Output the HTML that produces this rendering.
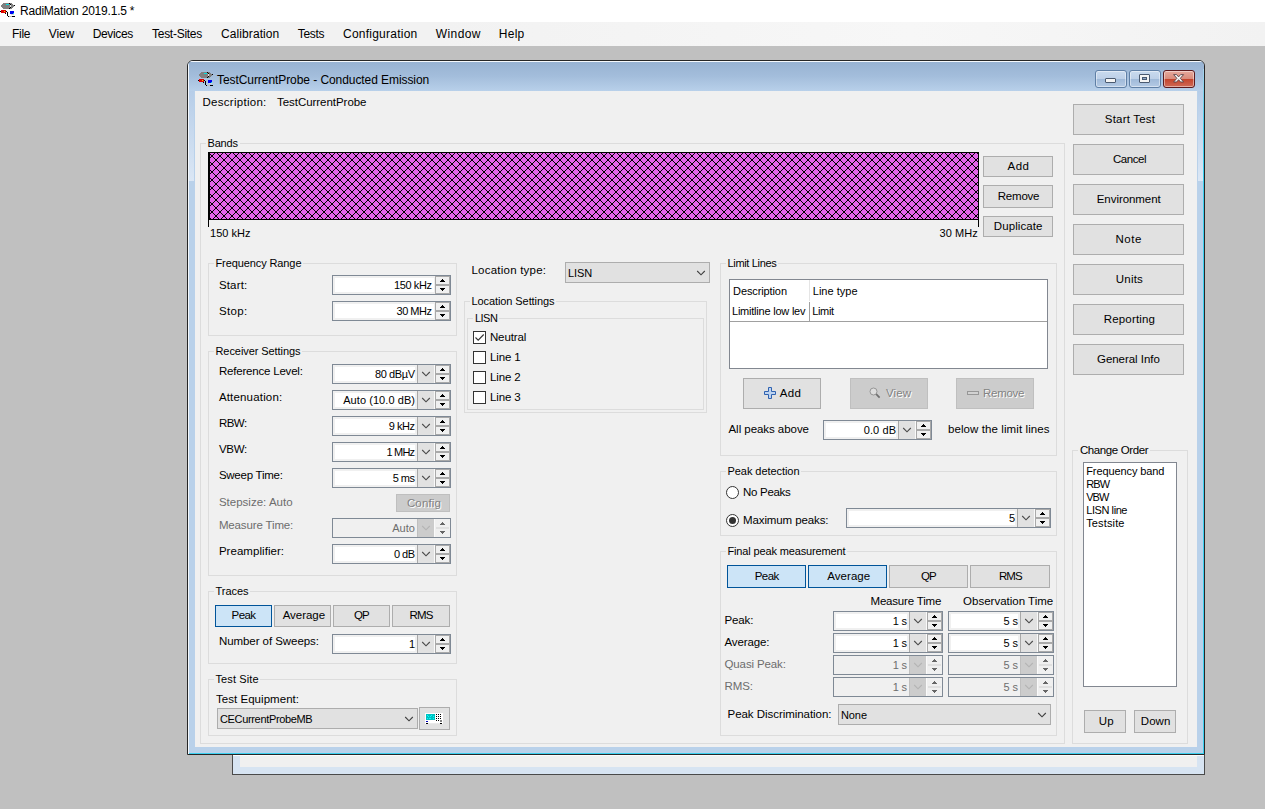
<!DOCTYPE html>
<html><head><meta charset="utf-8"><title>RadiMation 2019.1.5 *</title>
<style>
html,body{margin:0;padding:0;}
body{width:1265px;height:809px;overflow:hidden;position:relative;background:#c0c0c0;
font-family:"Liberation Sans",sans-serif;font-size:11.5px;color:#000;}
div,span,svg{position:absolute;box-sizing:border-box;}
.t{white-space:pre;line-height:16px;height:16px;}
.gb{border:1px solid #dcdcdc;}
.btn{background:#e1e1e1;border:1px solid #adadad;}
.btn.sel{background:#cce4f7;border-color:#005499;}
.btn.dis{background:#cccccc;border-color:#bfbfbf;}
</style></head><body>

<div class="" style="left:0px;top:0px;width:1265px;height:22px;background:#fff;"></div>
<div class="" style="left:0px;top:22px;width:1265px;height:24px;background:linear-gradient(to right,#f2f2f2 0%,#f2f2f2 35%,#f7f7f7 72%,#f2f2f2 100%);"></div>
<svg class="a" style="left:0px;top:2px" width="16" height="16" viewBox="0 0 16 16" shape-rendering="crispEdges"><polygon points="1,4 3,1 11,1 14,4 11,7 3,7" fill="#808080"/><rect x="6" y="2" width="3" height="1" fill="#00e0e0"/><rect x="10" y="3" width="1" height="2" fill="#e8e8e8"/><rect x="9" y="1" width="1" height="1" fill="#000"/><rect x="10" y="2" width="1" height="1" fill="#000"/><rect x="10" y="5" width="1" height="1" fill="#000"/><rect x="9" y="6" width="1" height="1" fill="#000"/><rect x="14" y="3" width="1" height="1" fill="#000"/><rect x="0" y="9" width="7" height="1" fill="#000"/><rect x="1" y="8" width="5" height="3" fill="#e00000"/><rect x="4" y="9" width="1" height="1" fill="#e0e000"/><rect x="5" y="11" width="1" height="1" fill="#000"/><rect x="7" y="10" width="1" height="4" fill="#000"/><rect x="8" y="14" width="1" height="1" fill="#000"/><rect x="9" y="14" width="3" height="1" fill="#c0c0c0"/><rect x="12" y="14" width="3" height="1" fill="#000"/><rect x="10" y="9" width="4" height="3" fill="#0000f0"/><rect x="13" y="11" width="1" height="1" fill="#00e0e0"/><rect x="11" y="12" width="3" height="1" fill="#d8d8d8"/></svg>
<span class="t " style="left:20.00px;top:3px;font-size:12px;letter-spacing:-0.212px;">RadiMation 2019.1.5 *</span>
<span class="t " style="left:12.00px;top:26px;font-size:12px;letter-spacing:-0.279px;">File</span>
<span class="t " style="left:48.75px;top:26px;font-size:12px;letter-spacing:-0.098px;">View</span>
<span class="t " style="left:92.75px;top:26px;font-size:12px;letter-spacing:-0.363px;">Devices</span>
<span class="t " style="left:152.00px;top:26px;font-size:12px;letter-spacing:-0.270px;">Test-Sites</span>
<span class="t " style="left:221.00px;top:26px;font-size:12px;letter-spacing:0.089px;">Calibration</span>
<span class="t " style="left:297.75px;top:26px;font-size:12px;letter-spacing:-0.314px;">Tests</span>
<span class="t " style="left:343.00px;top:26px;font-size:12px;letter-spacing:0.239px;">Configuration</span>
<span class="t " style="left:435.75px;top:26px;font-size:12px;letter-spacing:0.414px;">Window</span>
<span class="t " style="left:498.75px;top:26px;font-size:12px;letter-spacing:0.273px;">Help</span>
<div class="" style="left:232px;top:700px;width:973px;height:75px;background:#d7e4f2;border:1px solid #4a4a4a;"></div>
<div class="" style="left:240px;top:700px;width:957px;height:67px;background:#f0f0f0;"></div>
<div class="" style="left:233px;top:755px;width:971px;height:1px;background:#fafcfe;"></div>
<div style="left:187px;top:60px;width:1018px;height:695px;border:1px solid #262626;border-radius:6px 6px 0 0;background:#b9d1ea;overflow:hidden;"><div style="left:0;top:0;width:1016px;height:30px;background:linear-gradient(#97b2d2,#a3bddb 50%,#b8d0ea);"></div><div style="left:0;top:30px;width:7px;height:90px;background:linear-gradient(#b6cde8,#dbe7f5);"></div><div style="left:1009px;top:30px;width:7px;height:90px;background:linear-gradient(#b6cde8,#dbe7f5);"></div><div style="left:6px;top:30px;width:1px;height:90px;background:#b9d1ea;"></div><div style="left:1009px;top:30px;width:1px;height:90px;background:#b9d1ea;"></div><div style="left:0;top:0;width:1016px;height:1px;background:#f6f9fc;"></div><div style="left:0;top:1px;width:1px;height:692px;background:#f4f8fc;"></div><div style="left:1015px;top:8px;width:1px;height:685px;background:linear-gradient(#a8d4ec,#3ad0f0 60px);"></div><div style="left:1px;top:692px;width:1015px;height:1px;background:#3ad0f0;"></div></div>
<div class="" style="left:195px;top:91px;width:1002px;height:656px;background:#f0f0f0;"></div>
<svg class="a" style="left:198px;top:71px" width="16" height="16" viewBox="0 0 16 16" shape-rendering="crispEdges"><polygon points="1,4 3,1 11,1 14,4 11,7 3,7" fill="#808080"/><rect x="6" y="2" width="3" height="1" fill="#00e0e0"/><rect x="10" y="3" width="1" height="2" fill="#e8e8e8"/><rect x="9" y="1" width="1" height="1" fill="#000"/><rect x="10" y="2" width="1" height="1" fill="#000"/><rect x="10" y="5" width="1" height="1" fill="#000"/><rect x="9" y="6" width="1" height="1" fill="#000"/><rect x="14" y="3" width="1" height="1" fill="#000"/><rect x="0" y="9" width="7" height="1" fill="#000"/><rect x="1" y="8" width="5" height="3" fill="#e00000"/><rect x="4" y="9" width="1" height="1" fill="#e0e000"/><rect x="5" y="11" width="1" height="1" fill="#000"/><rect x="7" y="10" width="1" height="4" fill="#000"/><rect x="8" y="14" width="1" height="1" fill="#000"/><rect x="9" y="14" width="3" height="1" fill="#c0c0c0"/><rect x="12" y="14" width="3" height="1" fill="#000"/><rect x="10" y="9" width="4" height="3" fill="#0000f0"/><rect x="13" y="11" width="1" height="1" fill="#00e0e0"/><rect x="11" y="12" width="3" height="1" fill="#d8d8d8"/></svg>
<span class="t " style="left:217.00px;top:72px;font-size:12px;letter-spacing:-0.070px;">TestCurrentProbe - Conducted Emission</span>
<div class="" style="left:1095px;top:70px;width:32px;height:18px;background:linear-gradient(#c9daee 0%,#bdd0e8 48%,#9fb9d8 50%,#b4cae4 100%);border:1px solid #5f7fa5;border-radius:3px;box-shadow:inset 0 0 0 1px rgba(255,255,255,.45);"></div>
<div class="" style="left:1129px;top:70px;width:32px;height:18px;background:linear-gradient(#c9daee 0%,#bdd0e8 48%,#9fb9d8 50%,#b4cae4 100%);border:1px solid #5f7fa5;border-radius:3px;box-shadow:inset 0 0 0 1px rgba(255,255,255,.45);"></div>
<div class="" style="left:1163px;top:70px;width:32px;height:18px;background:linear-gradient(#e6a99d 0%,#d98c7c 48%,#c4432b 50%,#cf6a57 100%);border:1px solid #5c1a1e;border-radius:3px;box-shadow:inset 0 0 0 1px rgba(255,255,255,.45);"></div>
<div class="" style="left:1105px;top:78px;width:11px;height:5px;background:#f4f4f4;border:1px solid #4a5a70;border-radius:1px;"></div>
<div class="" style="left:1139px;top:74px;width:11px;height:9px;background:#f4f4f4;border:1px solid #4a5a70;border-radius:1px;"></div>
<div class="" style="left:1142px;top:77px;width:5px;height:3px;background:#8fa8c8;border:1px solid #4a5a70;"></div>
<svg class="a" style="left:1173px;top:74px" width="12" height="9" viewBox="0 0 12 9"><path d="M0.6 0.6 L3.6 0.6 L5.6 2.9 L7.6 0.6 L10.6 0.6 L7.3 4.3 L10.6 8 L7.6 8 L5.6 5.7 L3.6 8 L0.6 8 L3.9 4.3 Z" fill="#f6f6f6" stroke="#5a4348" stroke-width="0.9"/></svg>
<span class="t " style="left:202.50px;top:94px;font-size:11.5px;letter-spacing:0.276px;">Description:</span>
<span class="t " style="left:277.00px;top:94px;font-size:11.5px;letter-spacing:-0.042px;">TestCurrentProbe</span>
<div class="gb" style="left:200px;top:143px;width:865px;height:601px;"></div>
<div class="a" style="left:206px;top:141px;width:33.5px;height:5px;background:#f0f0f0;"></div>
<span class="t " style="left:207.50px;top:135px;font-size:11px;letter-spacing:-0.172px;">Bands</span>
<svg class="a" style="left:208px;top:152px" width="771" height="68" shape-rendering="crispEdges"><defs><pattern id="hx" width="8" height="8" patternUnits="userSpaceOnUse"><rect width="8" height="8" fill="#e264e8"/><g fill="#000"><rect x="0" y="0" width="1" height="1"/><rect x="0" y="7" width="1" height="1"/><rect x="1" y="1" width="1" height="1"/><rect x="1" y="6" width="1" height="1"/><rect x="2" y="2" width="1" height="1"/><rect x="2" y="5" width="1" height="1"/><rect x="3" y="3" width="1" height="1"/><rect x="3" y="4" width="1" height="1"/><rect x="4" y="4" width="1" height="1"/><rect x="4" y="3" width="1" height="1"/><rect x="5" y="5" width="1" height="1"/><rect x="5" y="2" width="1" height="1"/><rect x="6" y="6" width="1" height="1"/><rect x="6" y="1" width="1" height="1"/><rect x="7" y="7" width="1" height="1"/><rect x="7" y="0" width="1" height="1"/></g></pattern></defs><rect width="771" height="68" fill="url(#hx)"/><rect x="0" y="0" width="2" height="68" fill="#000"/><rect x="0" y="0" width="771" height="1" fill="#000"/><rect x="770" y="0" width="1" height="68" fill="#000"/><rect x="0" y="67" width="771" height="1" fill="#000"/></svg>
<div class="" style="left:208px;top:220px;width:1px;height:7px;background:#000;"></div>
<div class="" style="left:978px;top:220px;width:1px;height:7px;background:#000;"></div>
<span class="t " style="left:210.00px;top:225px;font-size:11px;letter-spacing:0.024px;">150 kHz</span>
<span class="t " style="left:939.50px;top:225px;font-size:11px;letter-spacing:0.060px;">30 MHz</span>
<div class="btn" style="left:983px;top:156px;width:70px;height:21px;"></div>
<span class="t " style="left:1007.50px;top:158px;font-size:11.5px;letter-spacing:0.519px;">Add</span>
<div class="btn" style="left:983px;top:185px;width:70px;height:23px;"></div>
<span class="t " style="left:997.75px;top:188px;font-size:11.5px;letter-spacing:-0.214px;">Remove</span>
<div class="btn" style="left:983px;top:216px;width:70px;height:21px;"></div>
<span class="t " style="left:993.75px;top:218px;font-size:11.5px;letter-spacing:0.101px;">Duplicate</span>
<div class="btn" style="left:1073px;top:104px;width:111px;height:31px;"></div>
<span class="t " style="left:1104.75px;top:111px;font-size:11.5px;letter-spacing:0.210px;">Start Test</span>
<div class="btn" style="left:1073px;top:144px;width:111px;height:31px;"></div>
<span class="t " style="left:1113.00px;top:151px;font-size:11.5px;letter-spacing:-0.459px;">Cancel</span>
<div class="btn" style="left:1073px;top:184px;width:111px;height:31px;"></div>
<span class="t " style="left:1096.75px;top:191px;font-size:11.5px;letter-spacing:-0.056px;">Environment</span>
<div class="btn" style="left:1073px;top:224px;width:111px;height:31px;"></div>
<span class="t " style="left:1115.50px;top:231px;font-size:11.5px;letter-spacing:0.569px;">Note</span>
<div class="btn" style="left:1073px;top:264px;width:111px;height:31px;"></div>
<span class="t " style="left:1115.80px;top:271px;font-size:11.5px;letter-spacing:0.200px;">Units</span>
<div class="btn" style="left:1073px;top:304px;width:111px;height:31px;"></div>
<span class="t " style="left:1103.70px;top:311px;font-size:11.5px;letter-spacing:0.180px;">Reporting</span>
<div class="btn" style="left:1073px;top:344px;width:111px;height:31px;"></div>
<span class="t " style="left:1097.00px;top:351px;font-size:11.5px;letter-spacing:-0.044px;">General Info</span>
<div class="gb" style="left:208px;top:263px;width:249px;height:73px;"></div>
<div class="a" style="left:214px;top:261px;width:89px;height:5px;background:#f0f0f0;"></div>
<span class="t " style="left:215.50px;top:255px;font-size:11px;letter-spacing:-0.103px;">Frequency Range</span>
<span class="t " style="left:218.90px;top:277px;font-size:11.5px;letter-spacing:0.164px;">Start:</span>
<span class="t " style="left:218.90px;top:303px;font-size:11.5px;letter-spacing:0.362px;">Stop:</span>
<div class="a bb" style="left:332px;top:275px;width:119px;height:20px;border:1px solid #7f8995;background:#f0f0f0;"></div>
<div class="a" style="left:335px;top:278px;width:99px;height:14px;background:#fff;"></div>
<span class="t " style="left:394.00px;top:277px;font-size:11px;letter-spacing:-0.392px;">150 kHz</span>
<div class="a" style="left:435px;top:276px;width:15px;height:18px;background:#a9a9a9;"></div>
<div class="a" style="left:436px;top:277px;width:13px;height:7px;background:#f0f0f0;"></div>
<div class="a" style="left:436px;top:286px;width:13px;height:7px;background:#f0f0f0;"></div>
<svg class="a" style="left:440px;top:279px" width="5" height="3" fill="#000" shape-rendering="crispEdges"><rect x="2" y="0" width="1" height="1"/><rect x="1" y="1" width="3" height="1"/><rect x="0" y="2" width="5" height="1"/></svg>
<svg class="a" style="left:440px;top:288px" width="5" height="3" fill="#000" shape-rendering="crispEdges"><rect x="0" y="0" width="5" height="1"/><rect x="1" y="1" width="3" height="1"/><rect x="2" y="2" width="1" height="1"/></svg>
<div class="a bb" style="left:332px;top:301px;width:119px;height:20px;border:1px solid #7f8995;background:#f0f0f0;"></div>
<div class="a" style="left:335px;top:304px;width:99px;height:14px;background:#fff;"></div>
<span class="t " style="left:396.50px;top:303px;font-size:11px;letter-spacing:-0.480px;">30 MHz</span>
<div class="a" style="left:435px;top:302px;width:15px;height:18px;background:#a9a9a9;"></div>
<div class="a" style="left:436px;top:303px;width:13px;height:7px;background:#f0f0f0;"></div>
<div class="a" style="left:436px;top:312px;width:13px;height:7px;background:#f0f0f0;"></div>
<svg class="a" style="left:440px;top:305px" width="5" height="3" fill="#000" shape-rendering="crispEdges"><rect x="2" y="0" width="1" height="1"/><rect x="1" y="1" width="3" height="1"/><rect x="0" y="2" width="5" height="1"/></svg>
<svg class="a" style="left:440px;top:314px" width="5" height="3" fill="#000" shape-rendering="crispEdges"><rect x="0" y="0" width="5" height="1"/><rect x="1" y="1" width="3" height="1"/><rect x="2" y="2" width="1" height="1"/></svg>
<div class="gb" style="left:208px;top:351px;width:249px;height:225px;"></div>
<div class="a" style="left:214px;top:349px;width:88px;height:5px;background:#f0f0f0;"></div>
<span class="t " style="left:215.50px;top:343px;font-size:11px;letter-spacing:-0.075px;">Receiver Settings</span>
<span class="t " style="left:218.90px;top:363px;font-size:11.5px;letter-spacing:-0.196px;">Reference Level:</span>
<div class="a bb" style="left:332px;top:364px;width:119px;height:20px;border:1px solid #7f8995;background:#f0f0f0;"></div>
<div class="a" style="left:335px;top:367px;width:80px;height:14px;background:#fff;"></div>
<div class="a bb" style="left:417px;top:365px;width:17px;height:18px;background:#e1e1e1;border-left:1px solid #a8a8a8;"></div>
<div class="a" style="left:434px;top:365px;width:1px;height:18px;background:#fafafa;"></div>
<svg class="a" style="left:421px;top:369.5px" width="10" height="8" viewBox="0 0 10 8"><path d="M1.2 2 L5 5.8 L8.8 2" fill="none" stroke="#4a4a4a" stroke-width="1.1"/></svg>
<span class="t " style="left:375.00px;top:366px;font-size:11px;letter-spacing:-0.403px;">80 dBµV</span>
<div class="a" style="left:435px;top:365px;width:15px;height:18px;background:#a9a9a9;"></div>
<div class="a" style="left:436px;top:366px;width:13px;height:7px;background:#f0f0f0;"></div>
<div class="a" style="left:436px;top:375px;width:13px;height:7px;background:#f0f0f0;"></div>
<svg class="a" style="left:440px;top:368px" width="5" height="3" fill="#000" shape-rendering="crispEdges"><rect x="2" y="0" width="1" height="1"/><rect x="1" y="1" width="3" height="1"/><rect x="0" y="2" width="5" height="1"/></svg>
<svg class="a" style="left:440px;top:377px" width="5" height="3" fill="#000" shape-rendering="crispEdges"><rect x="0" y="0" width="5" height="1"/><rect x="1" y="1" width="3" height="1"/><rect x="2" y="2" width="1" height="1"/></svg>
<span class="t " style="left:218.90px;top:389px;font-size:11.5px;letter-spacing:0.175px;">Attenuation:</span>
<div class="a bb" style="left:332px;top:390px;width:119px;height:20px;border:1px solid #7f8995;background:#f0f0f0;"></div>
<div class="a" style="left:335px;top:393px;width:80px;height:14px;background:#fff;"></div>
<div class="a bb" style="left:417px;top:391px;width:17px;height:18px;background:#e1e1e1;border-left:1px solid #a8a8a8;"></div>
<div class="a" style="left:434px;top:391px;width:1px;height:18px;background:#fafafa;"></div>
<svg class="a" style="left:421px;top:395.5px" width="10" height="8" viewBox="0 0 10 8"><path d="M1.2 2 L5 5.8 L8.8 2" fill="none" stroke="#4a4a4a" stroke-width="1.1"/></svg>
<span class="t " style="left:343.20px;top:392px;font-size:11px;letter-spacing:0.067px;">Auto (10.0 dB)</span>
<div class="a" style="left:435px;top:391px;width:15px;height:18px;background:#a9a9a9;"></div>
<div class="a" style="left:436px;top:392px;width:13px;height:7px;background:#f0f0f0;"></div>
<div class="a" style="left:436px;top:401px;width:13px;height:7px;background:#f0f0f0;"></div>
<svg class="a" style="left:440px;top:394px" width="5" height="3" fill="#000" shape-rendering="crispEdges"><rect x="2" y="0" width="1" height="1"/><rect x="1" y="1" width="3" height="1"/><rect x="0" y="2" width="5" height="1"/></svg>
<svg class="a" style="left:440px;top:403px" width="5" height="3" fill="#000" shape-rendering="crispEdges"><rect x="0" y="0" width="5" height="1"/><rect x="1" y="1" width="3" height="1"/><rect x="2" y="2" width="1" height="1"/></svg>
<span class="t " style="left:218.90px;top:415px;font-size:11.5px;letter-spacing:-0.506px;">RBW:</span>
<div class="a bb" style="left:332px;top:416px;width:119px;height:20px;border:1px solid #7f8995;background:#f0f0f0;"></div>
<div class="a" style="left:335px;top:419px;width:80px;height:14px;background:#fff;"></div>
<div class="a bb" style="left:417px;top:417px;width:17px;height:18px;background:#e1e1e1;border-left:1px solid #a8a8a8;"></div>
<div class="a" style="left:434px;top:417px;width:1px;height:18px;background:#fafafa;"></div>
<svg class="a" style="left:421px;top:421.5px" width="10" height="8" viewBox="0 0 10 8"><path d="M1.2 2 L5 5.8 L8.8 2" fill="none" stroke="#4a4a4a" stroke-width="1.1"/></svg>
<span class="t " style="left:388.80px;top:418px;font-size:11px;letter-spacing:-0.479px;">9 kHz</span>
<div class="a" style="left:435px;top:417px;width:15px;height:18px;background:#a9a9a9;"></div>
<div class="a" style="left:436px;top:418px;width:13px;height:7px;background:#f0f0f0;"></div>
<div class="a" style="left:436px;top:427px;width:13px;height:7px;background:#f0f0f0;"></div>
<svg class="a" style="left:440px;top:420px" width="5" height="3" fill="#000" shape-rendering="crispEdges"><rect x="2" y="0" width="1" height="1"/><rect x="1" y="1" width="3" height="1"/><rect x="0" y="2" width="5" height="1"/></svg>
<svg class="a" style="left:440px;top:429px" width="5" height="3" fill="#000" shape-rendering="crispEdges"><rect x="0" y="0" width="5" height="1"/><rect x="1" y="1" width="3" height="1"/><rect x="2" y="2" width="1" height="1"/></svg>
<span class="t " style="left:218.90px;top:441px;font-size:11.5px;letter-spacing:-0.294px;">VBW:</span>
<div class="a bb" style="left:332px;top:442px;width:119px;height:20px;border:1px solid #7f8995;background:#f0f0f0;"></div>
<div class="a" style="left:335px;top:445px;width:80px;height:14px;background:#fff;"></div>
<div class="a bb" style="left:417px;top:443px;width:17px;height:18px;background:#e1e1e1;border-left:1px solid #a8a8a8;"></div>
<div class="a" style="left:434px;top:443px;width:1px;height:18px;background:#fafafa;"></div>
<svg class="a" style="left:421px;top:447.5px" width="10" height="8" viewBox="0 0 10 8"><path d="M1.2 2 L5 5.8 L8.8 2" fill="none" stroke="#4a4a4a" stroke-width="1.1"/></svg>
<span class="t " style="left:386.50px;top:444px;font-size:11px;letter-spacing:-0.820px;">1 MHz</span>
<div class="a" style="left:435px;top:443px;width:15px;height:18px;background:#a9a9a9;"></div>
<div class="a" style="left:436px;top:444px;width:13px;height:7px;background:#f0f0f0;"></div>
<div class="a" style="left:436px;top:453px;width:13px;height:7px;background:#f0f0f0;"></div>
<svg class="a" style="left:440px;top:446px" width="5" height="3" fill="#000" shape-rendering="crispEdges"><rect x="2" y="0" width="1" height="1"/><rect x="1" y="1" width="3" height="1"/><rect x="0" y="2" width="5" height="1"/></svg>
<svg class="a" style="left:440px;top:455px" width="5" height="3" fill="#000" shape-rendering="crispEdges"><rect x="0" y="0" width="5" height="1"/><rect x="1" y="1" width="3" height="1"/><rect x="2" y="2" width="1" height="1"/></svg>
<span class="t " style="left:218.90px;top:467px;font-size:11.5px;letter-spacing:-0.247px;">Sweep Time:</span>
<div class="a bb" style="left:332px;top:468px;width:119px;height:20px;border:1px solid #7f8995;background:#f0f0f0;"></div>
<div class="a" style="left:335px;top:471px;width:80px;height:14px;background:#fff;"></div>
<div class="a bb" style="left:417px;top:469px;width:17px;height:18px;background:#e1e1e1;border-left:1px solid #a8a8a8;"></div>
<div class="a" style="left:434px;top:469px;width:1px;height:18px;background:#fafafa;"></div>
<svg class="a" style="left:421px;top:473.5px" width="10" height="8" viewBox="0 0 10 8"><path d="M1.2 2 L5 5.8 L8.8 2" fill="none" stroke="#4a4a4a" stroke-width="1.1"/></svg>
<span class="t " style="left:392.70px;top:470px;font-size:11px;letter-spacing:-0.512px;">5 ms</span>
<div class="a" style="left:435px;top:469px;width:15px;height:18px;background:#a9a9a9;"></div>
<div class="a" style="left:436px;top:470px;width:13px;height:7px;background:#f0f0f0;"></div>
<div class="a" style="left:436px;top:479px;width:13px;height:7px;background:#f0f0f0;"></div>
<svg class="a" style="left:440px;top:472px" width="5" height="3" fill="#000" shape-rendering="crispEdges"><rect x="2" y="0" width="1" height="1"/><rect x="1" y="1" width="3" height="1"/><rect x="0" y="2" width="5" height="1"/></svg>
<svg class="a" style="left:440px;top:481px" width="5" height="3" fill="#000" shape-rendering="crispEdges"><rect x="0" y="0" width="5" height="1"/><rect x="1" y="1" width="3" height="1"/><rect x="2" y="2" width="1" height="1"/></svg>
<span class="t " style="left:218.90px;top:517px;font-size:11.5px;letter-spacing:-0.138px;color:#6d6d6d;">Measure Time:</span>
<div class="a bb" style="left:332px;top:518px;width:119px;height:20px;border:1px solid #7f8995;background:#f0f0f0;"></div>
<div class="a bb" style="left:417px;top:519px;width:17px;height:18px;background:#cccccc;border-left:1px solid #bfbfbf;"></div>
<div class="a" style="left:434px;top:519px;width:1px;height:18px;background:#fafafa;"></div>
<svg class="a" style="left:421px;top:523.5px" width="10" height="8" viewBox="0 0 10 8"><path d="M1.2 2 L5 5.8 L8.8 2" fill="none" stroke="#b4b4b4" stroke-width="1.1"/></svg>
<span class="t " style="left:392.20px;top:520px;font-size:11px;letter-spacing:0.057px;color:#6d6d6d;">Auto</span>
<div class="a" style="left:436px;top:527px;width:13px;height:2px;background:#e0e0e0;"></div>
<svg class="a" style="left:440px;top:522px" width="5" height="3" fill="#666" shape-rendering="crispEdges"><rect x="2" y="0" width="1" height="1"/><rect x="1" y="1" width="3" height="1"/><rect x="0" y="2" width="5" height="1"/></svg>
<svg class="a" style="left:440px;top:531px" width="5" height="3" fill="#666" shape-rendering="crispEdges"><rect x="0" y="0" width="5" height="1"/><rect x="1" y="1" width="3" height="1"/><rect x="2" y="2" width="1" height="1"/></svg>
<span class="t " style="left:218.90px;top:543px;font-size:11.5px;letter-spacing:0.046px;">Preamplifier:</span>
<div class="a bb" style="left:332px;top:544px;width:119px;height:20px;border:1px solid #7f8995;background:#f0f0f0;"></div>
<div class="a" style="left:335px;top:547px;width:80px;height:14px;background:#fff;"></div>
<div class="a bb" style="left:417px;top:545px;width:17px;height:18px;background:#e1e1e1;border-left:1px solid #a8a8a8;"></div>
<div class="a" style="left:434px;top:545px;width:1px;height:18px;background:#fafafa;"></div>
<svg class="a" style="left:421px;top:549.5px" width="10" height="8" viewBox="0 0 10 8"><path d="M1.2 2 L5 5.8 L8.8 2" fill="none" stroke="#4a4a4a" stroke-width="1.1"/></svg>
<span class="t " style="left:394.00px;top:546px;font-size:11px;letter-spacing:-0.543px;">0 dB</span>
<div class="a" style="left:435px;top:545px;width:15px;height:18px;background:#a9a9a9;"></div>
<div class="a" style="left:436px;top:546px;width:13px;height:7px;background:#f0f0f0;"></div>
<div class="a" style="left:436px;top:555px;width:13px;height:7px;background:#f0f0f0;"></div>
<svg class="a" style="left:440px;top:548px" width="5" height="3" fill="#000" shape-rendering="crispEdges"><rect x="2" y="0" width="1" height="1"/><rect x="1" y="1" width="3" height="1"/><rect x="0" y="2" width="5" height="1"/></svg>
<svg class="a" style="left:440px;top:557px" width="5" height="3" fill="#000" shape-rendering="crispEdges"><rect x="0" y="0" width="5" height="1"/><rect x="1" y="1" width="3" height="1"/><rect x="2" y="2" width="1" height="1"/></svg>
<span class="t " style="left:218.90px;top:494px;font-size:11.5px;letter-spacing:0.014px;color:#6d6d6d;">Stepsize: Auto</span>
<div class="btn dis" style="left:396px;top:494px;width:54px;height:18px;"></div>
<span class="t " style="left:406.90px;top:495px;font-size:11.5px;letter-spacing:0.152px;color:#838383;text-shadow:1px 1px 0 #fff;">Config</span>
<div class="gb" style="left:208px;top:591px;width:249px;height:73px;"></div>
<div class="a" style="left:214px;top:589px;width:36px;height:5px;background:#f0f0f0;"></div>
<span class="t " style="left:215.50px;top:583px;font-size:11px;letter-spacing:-0.042px;">Traces</span>
<div class="btn sel" style="left:215px;top:605px;width:57px;height:22px;"></div>
<span class="t " style="left:231.50px;top:607px;font-size:11.5px;letter-spacing:-0.537px;">Peak</span>
<div class="btn" style="left:274px;top:605px;width:57px;height:22px;"></div>
<span class="t " style="left:282.70px;top:607px;font-size:11.5px;letter-spacing:-0.038px;">Average</span>
<div class="btn" style="left:333px;top:605px;width:57px;height:22px;"></div>
<span class="t " style="left:354.00px;top:607px;font-size:11.5px;letter-spacing:-0.900px;">QP</span>
<div class="btn" style="left:392px;top:605px;width:58px;height:22px;"></div>
<span class="t " style="left:409.60px;top:607px;font-size:11.5px;letter-spacing:-0.900px;">RMS</span>
<span class="t " style="left:218.90px;top:633px;font-size:11.5px;letter-spacing:-0.056px;">Number of Sweeps:</span>
<div class="a bb" style="left:332px;top:634px;width:119px;height:20px;border:1px solid #7f8995;background:#f0f0f0;"></div>
<div class="a" style="left:335px;top:637px;width:80px;height:14px;background:#fff;"></div>
<div class="a bb" style="left:417px;top:635px;width:17px;height:18px;background:#e1e1e1;border-left:1px solid #a8a8a8;"></div>
<div class="a" style="left:434px;top:635px;width:1px;height:18px;background:#fafafa;"></div>
<svg class="a" style="left:421px;top:639.5px" width="10" height="8" viewBox="0 0 10 8"><path d="M1.2 2 L5 5.8 L8.8 2" fill="none" stroke="#4a4a4a" stroke-width="1.1"/></svg>
<span class="t " style="left:408.88px;top:636px;font-size:11px;letter-spacing:0.000px;">1</span>
<div class="a" style="left:435px;top:635px;width:15px;height:18px;background:#a9a9a9;"></div>
<div class="a" style="left:436px;top:636px;width:13px;height:7px;background:#f0f0f0;"></div>
<div class="a" style="left:436px;top:645px;width:13px;height:7px;background:#f0f0f0;"></div>
<svg class="a" style="left:440px;top:638px" width="5" height="3" fill="#000" shape-rendering="crispEdges"><rect x="2" y="0" width="1" height="1"/><rect x="1" y="1" width="3" height="1"/><rect x="0" y="2" width="5" height="1"/></svg>
<svg class="a" style="left:440px;top:647px" width="5" height="3" fill="#000" shape-rendering="crispEdges"><rect x="0" y="0" width="5" height="1"/><rect x="1" y="1" width="3" height="1"/><rect x="2" y="2" width="1" height="1"/></svg>
<div class="gb" style="left:208px;top:679px;width:249px;height:57px;"></div>
<div class="a" style="left:214px;top:677px;width:46px;height:5px;background:#f0f0f0;"></div>
<span class="t " style="left:215.50px;top:671px;font-size:11px;letter-spacing:0.102px;">Test Site</span>
<span class="t " style="left:216.00px;top:691px;font-size:11.5px;letter-spacing:0.039px;">Test Equipment:</span>
<div class="btn" style="left:217px;top:708px;width:201px;height:21px;"></div>
<span class="t " style="left:220.00px;top:711px;font-size:11px;letter-spacing:-0.341px;">CECurrentProbeMB</span>
<svg class="a" style="left:404px;top:714.75px" width="10" height="8" viewBox="0 0 10 8"><path d="M1.2 2 L5 5.8 L8.8 2" fill="none" stroke="#404040" stroke-width="1.1"/></svg>
<div class="btn" style="left:419px;top:707px;width:31px;height:23px;"></div>
<svg class="a" style="left:425px;top:713px" width="18" height="11" shape-rendering="crispEdges"><rect width="18" height="11" fill="#fff"/><rect x="1" y="1" width="9" height="6" fill="#00c0c0"/><g fill="#00ffff"><rect x="2" y="2" width="1" height="1"/><rect x="3" y="3" width="1" height="1"/><rect x="5" y="3" width="1" height="1"/><rect x="6" y="2" width="1" height="1"/><rect x="8" y="3" width="1" height="1"/><rect x="2" y="5" width="1" height="1"/><rect x="4" y="5" width="2" height="1"/><rect x="8" y="5" width="1" height="1"/></g><g fill="#000"><rect x="11" y="1" width="1" height="1"/><rect x="13" y="1" width="1" height="1"/><rect x="15" y="1" width="1" height="1"/><rect x="11" y="3" width="1" height="1"/><rect x="13" y="3" width="1" height="1"/><rect x="15" y="3" width="1" height="1"/><rect x="11" y="5" width="1" height="1"/><rect x="13" y="5" width="1" height="1"/><rect x="15" y="5" width="1" height="1"/><rect x="11" y="7" width="1" height="1"/><rect x="13" y="7" width="1" height="1"/><rect x="1" y="10" width="2" height="1"/><rect x="15" y="10" width="2" height="1"/></g><rect x="15" y="7" width="2" height="2" fill="#808080"/><rect x="1" y="8" width="2" height="1" fill="#0000c0"/><rect x="3" y="10" width="12" height="1" fill="#e8e8e8"/></svg>
<span class="t " style="left:471.50px;top:262px;font-size:11.5px;letter-spacing:0.223px;">Location type:</span>
<div class="btn" style="left:565px;top:262px;width:145px;height:21px;"></div>
<span class="t " style="left:568.00px;top:265px;font-size:11px;letter-spacing:-0.100px;">LISN</span>
<svg class="a" style="left:696px;top:268.75px" width="10" height="8" viewBox="0 0 10 8"><path d="M1.2 2 L5 5.8 L8.8 2" fill="none" stroke="#404040" stroke-width="1.1"/></svg>
<div class="gb" style="left:464px;top:301px;width:243px;height:112px;"></div>
<div class="a" style="left:470px;top:299px;width:86px;height:5px;background:#f0f0f0;"></div>
<span class="t " style="left:471.50px;top:293px;font-size:11px;letter-spacing:-0.087px;">Location Settings</span>
<div class="gb" style="left:467px;top:318px;width:237px;height:92px;"></div>
<div class="a" style="left:473.4px;top:316px;width:26.0px;height:5px;background:#f0f0f0;"></div>
<span class="t " style="left:474.90px;top:310px;font-size:11px;letter-spacing:-0.485px;">LISN</span>
<div class="" style="left:473px;top:331px;width:13px;height:13px;background:#fff;border:1px solid #333;"></div>
<svg class="a" style="left:473px;top:331px" width="13" height="13" viewBox="0 0 13 13"><path d="M2.5 6.5 L5.2 9.2 L10.7 3.5" fill="none" stroke="#333" stroke-width="1.1"/></svg>
<span class="t " style="left:489.90px;top:329px;font-size:11.5px;letter-spacing:-0.100px;">Neutral</span>
<div class="" style="left:473px;top:351px;width:13px;height:13px;background:#fff;border:1px solid #333;"></div>
<span class="t " style="left:489.90px;top:349px;font-size:11.5px;letter-spacing:-0.100px;">Line 1</span>
<div class="" style="left:473px;top:371px;width:13px;height:13px;background:#fff;border:1px solid #333;"></div>
<span class="t " style="left:489.90px;top:369px;font-size:11.5px;letter-spacing:-0.100px;">Line 2</span>
<div class="" style="left:473px;top:391px;width:13px;height:13px;background:#fff;border:1px solid #333;"></div>
<span class="t " style="left:489.90px;top:389px;font-size:11.5px;letter-spacing:-0.100px;">Line 3</span>
<div class="gb" style="left:720px;top:263px;width:337px;height:193px;"></div>
<div class="a" style="left:726px;top:261px;width:52.299999999999955px;height:5px;background:#f0f0f0;"></div>
<span class="t " style="left:727.50px;top:255px;font-size:11px;letter-spacing:-0.328px;">Limit Lines</span>
<div class="" style="left:729px;top:279px;width:319px;height:90px;background:#fff;border:1px solid #828790;"></div>
<div class="" style="left:809px;top:280px;width:1px;height:21px;background:#e5e5e5;"></div>
<div class="" style="left:809px;top:302px;width:1px;height:19px;background:#a0a0a0;"></div>
<div class="" style="left:730px;top:321px;width:317px;height:1px;background:#a0a0a0;"></div>
<span class="t " style="left:733.10px;top:283px;font-size:11px;letter-spacing:-0.112px;">Description</span>
<span class="t " style="left:812.80px;top:283px;font-size:11px;letter-spacing:0.007px;">Line type</span>
<span class="t " style="left:732.00px;top:303px;font-size:11px;letter-spacing:-0.220px;">Limitline low lev</span>
<span class="t " style="left:812.30px;top:303px;font-size:11px;letter-spacing:-0.381px;">Limit</span>
<div class="btn" style="left:743px;top:378px;width:78px;height:31px;"></div>
<span class="t " style="left:779.80px;top:385px;font-size:11.5px;letter-spacing:0.369px;">Add</span>
<svg class="a" style="left:764px;top:387px" width="12" height="12" viewBox="0 0 12 12"><path d="M4.5 0.5 H7.5 V4.5 H11.5 V7.5 H7.5 V11.5 H4.5 V7.5 H0.5 V4.5 H4.5 Z" fill="#bdd3f0" stroke="#2f62b0" stroke-width="1"/></svg>
<div class="btn dis" style="left:850px;top:378px;width:78px;height:31px;"></div>
<span class="t " style="left:886.10px;top:385px;font-size:11.5px;letter-spacing:0.061px;color:#838383;text-shadow:1px 1px 0 #fff;">View</span>
<svg class="a" style="left:869px;top:387px" width="12" height="12" viewBox="0 0 12 12"><circle cx="4.5" cy="4.5" r="3.5" fill="#dedede" stroke="#8f8f8f" stroke-width="0.9"/><path d="M7.2 7.2 L10.6 10.6" stroke="#6f6f6f" stroke-width="1.7"/></svg>
<div class="btn dis" style="left:956px;top:378px;width:78px;height:31px;"></div>
<span class="t " style="left:983.00px;top:385px;font-size:11.5px;letter-spacing:-0.284px;color:#838383;text-shadow:1px 1px 0 #fff;">Remove</span>
<div class="" style="left:967px;top:391px;width:12px;height:4px;background:#d2d2d2;border:1px solid #979797;"></div>
<span class="t " style="left:728.50px;top:421px;font-size:11.5px;letter-spacing:-0.049px;">All peaks above</span>
<div class="a bb" style="left:823px;top:420px;width:109px;height:20px;border:1px solid #7f8995;background:#f0f0f0;"></div>
<div class="a" style="left:826px;top:423px;width:70px;height:14px;background:#fff;"></div>
<div class="a bb" style="left:898px;top:421px;width:17px;height:18px;background:#e1e1e1;border-left:1px solid #a8a8a8;"></div>
<div class="a" style="left:915px;top:421px;width:1px;height:18px;background:#fafafa;"></div>
<svg class="a" style="left:902px;top:425.5px" width="10" height="8" viewBox="0 0 10 8"><path d="M1.2 2 L5 5.8 L8.8 2" fill="none" stroke="#4a4a4a" stroke-width="1.1"/></svg>
<span class="t " style="left:863.70px;top:422px;font-size:11px;letter-spacing:0.100px;">0.0 dB</span>
<div class="a" style="left:916px;top:421px;width:15px;height:18px;background:#a9a9a9;"></div>
<div class="a" style="left:917px;top:422px;width:13px;height:7px;background:#f0f0f0;"></div>
<div class="a" style="left:917px;top:431px;width:13px;height:7px;background:#f0f0f0;"></div>
<svg class="a" style="left:921px;top:424px" width="5" height="3" fill="#000" shape-rendering="crispEdges"><rect x="2" y="0" width="1" height="1"/><rect x="1" y="1" width="3" height="1"/><rect x="0" y="2" width="5" height="1"/></svg>
<svg class="a" style="left:921px;top:433px" width="5" height="3" fill="#000" shape-rendering="crispEdges"><rect x="0" y="0" width="5" height="1"/><rect x="1" y="1" width="3" height="1"/><rect x="2" y="2" width="1" height="1"/></svg>
<span class="t " style="left:948.00px;top:421px;font-size:11.5px;letter-spacing:0.090px;">below the limit lines</span>
<div class="gb" style="left:720px;top:471px;width:337px;height:65px;"></div>
<div class="a" style="left:726px;top:469px;width:75px;height:5px;background:#f0f0f0;"></div>
<span class="t " style="left:727.50px;top:463px;font-size:11px;letter-spacing:-0.059px;">Peak detection</span>
<div class="" style="left:726px;top:486px;width:13px;height:13px;background:#fff;border:1px solid #333;border-radius:7px;"></div>
<span class="t " style="left:743.00px;top:484px;font-size:11.5px;letter-spacing:-0.294px;">No Peaks</span>
<div class="" style="left:726px;top:514px;width:13px;height:13px;background:#fff;border:1px solid #333;border-radius:7px;"></div>
<div class="" style="left:729px;top:517px;width:7px;height:7px;background:#333;border-radius:4px;"></div>
<span class="t " style="left:743.00px;top:512px;font-size:11.5px;letter-spacing:-0.109px;">Maximum peaks:</span>
<div class="a bb" style="left:846px;top:508px;width:205px;height:20px;border:1px solid #7f8995;background:#f0f0f0;"></div>
<div class="a" style="left:849px;top:511px;width:166px;height:14px;background:#fff;"></div>
<div class="a bb" style="left:1017px;top:509px;width:17px;height:18px;background:#e1e1e1;border-left:1px solid #a8a8a8;"></div>
<div class="a" style="left:1034px;top:509px;width:1px;height:18px;background:#fafafa;"></div>
<svg class="a" style="left:1021px;top:513.5px" width="10" height="8" viewBox="0 0 10 8"><path d="M1.2 2 L5 5.8 L8.8 2" fill="none" stroke="#4a4a4a" stroke-width="1.1"/></svg>
<span class="t " style="left:1008.88px;top:510px;font-size:11px;letter-spacing:0.000px;">5</span>
<div class="a" style="left:1035px;top:509px;width:15px;height:18px;background:#a9a9a9;"></div>
<div class="a" style="left:1036px;top:510px;width:13px;height:7px;background:#f0f0f0;"></div>
<div class="a" style="left:1036px;top:519px;width:13px;height:7px;background:#f0f0f0;"></div>
<svg class="a" style="left:1040px;top:512px" width="5" height="3" fill="#000" shape-rendering="crispEdges"><rect x="2" y="0" width="1" height="1"/><rect x="1" y="1" width="3" height="1"/><rect x="0" y="2" width="5" height="1"/></svg>
<svg class="a" style="left:1040px;top:521px" width="5" height="3" fill="#000" shape-rendering="crispEdges"><rect x="0" y="0" width="5" height="1"/><rect x="1" y="1" width="3" height="1"/><rect x="2" y="2" width="1" height="1"/></svg>
<div class="gb" style="left:720px;top:551px;width:337px;height:185px;"></div>
<div class="a" style="left:726px;top:549px;width:121px;height:5px;background:#f0f0f0;"></div>
<span class="t " style="left:727.50px;top:543px;font-size:11px;letter-spacing:-0.146px;">Final peak measurement</span>
<div class="btn sel" style="left:727px;top:565px;width:79px;height:23px;"></div>
<span class="t " style="left:754.70px;top:568px;font-size:11.5px;letter-spacing:-0.537px;">Peak</span>
<div class="btn sel" style="left:808px;top:565px;width:79px;height:23px;"></div>
<span class="t " style="left:827.30px;top:568px;font-size:11.5px;letter-spacing:0.046px;">Average</span>
<div class="btn" style="left:889px;top:565px;width:79px;height:23px;"></div>
<span class="t " style="left:921.00px;top:568px;font-size:11.5px;letter-spacing:-0.900px;">QP</span>
<div class="btn" style="left:970px;top:565px;width:80px;height:23px;"></div>
<span class="t " style="left:998.90px;top:568px;font-size:11.5px;letter-spacing:-0.900px;">RMS</span>
<span class="t " style="left:870.50px;top:593px;font-size:11.5px;letter-spacing:-0.187px;">Measure Time</span>
<span class="t " style="left:963.10px;top:593px;font-size:11.5px;letter-spacing:-0.001px;">Observation Time</span>
<span class="t " style="left:724.50px;top:612px;font-size:11.5px;letter-spacing:-0.120px;">Peak:</span>
<div class="a bb" style="left:833px;top:611px;width:110px;height:20px;border:1px solid #7f8995;background:#f0f0f0;"></div>
<div class="a" style="left:836px;top:614px;width:71px;height:14px;background:#fff;"></div>
<div class="a bb" style="left:909px;top:612px;width:17px;height:18px;background:#e1e1e1;border-left:1px solid #a8a8a8;"></div>
<div class="a" style="left:926px;top:612px;width:1px;height:18px;background:#fafafa;"></div>
<svg class="a" style="left:913px;top:616.5px" width="10" height="8" viewBox="0 0 10 8"><path d="M1.2 2 L5 5.8 L8.8 2" fill="none" stroke="#4a4a4a" stroke-width="1.1"/></svg>
<span class="t " style="left:892.80px;top:613px;font-size:11px;letter-spacing:-0.237px;">1 s</span>
<div class="a" style="left:927px;top:612px;width:15px;height:18px;background:#a9a9a9;"></div>
<div class="a" style="left:928px;top:613px;width:13px;height:7px;background:#f0f0f0;"></div>
<div class="a" style="left:928px;top:622px;width:13px;height:7px;background:#f0f0f0;"></div>
<svg class="a" style="left:932px;top:615px" width="5" height="3" fill="#000" shape-rendering="crispEdges"><rect x="2" y="0" width="1" height="1"/><rect x="1" y="1" width="3" height="1"/><rect x="0" y="2" width="5" height="1"/></svg>
<svg class="a" style="left:932px;top:624px" width="5" height="3" fill="#000" shape-rendering="crispEdges"><rect x="0" y="0" width="5" height="1"/><rect x="1" y="1" width="3" height="1"/><rect x="2" y="2" width="1" height="1"/></svg>
<div class="a bb" style="left:948px;top:611px;width:106px;height:20px;border:1px solid #7f8995;background:#f0f0f0;"></div>
<div class="a" style="left:951px;top:614px;width:67px;height:14px;background:#fff;"></div>
<div class="a bb" style="left:1020px;top:612px;width:17px;height:18px;background:#e1e1e1;border-left:1px solid #a8a8a8;"></div>
<div class="a" style="left:1037px;top:612px;width:1px;height:18px;background:#fafafa;"></div>
<svg class="a" style="left:1024px;top:616.5px" width="10" height="8" viewBox="0 0 10 8"><path d="M1.2 2 L5 5.8 L8.8 2" fill="none" stroke="#4a4a4a" stroke-width="1.1"/></svg>
<span class="t " style="left:1003.50px;top:613px;font-size:11px;letter-spacing:-0.087px;">5 s</span>
<div class="a" style="left:1038px;top:612px;width:15px;height:18px;background:#a9a9a9;"></div>
<div class="a" style="left:1039px;top:613px;width:13px;height:7px;background:#f0f0f0;"></div>
<div class="a" style="left:1039px;top:622px;width:13px;height:7px;background:#f0f0f0;"></div>
<svg class="a" style="left:1043px;top:615px" width="5" height="3" fill="#000" shape-rendering="crispEdges"><rect x="2" y="0" width="1" height="1"/><rect x="1" y="1" width="3" height="1"/><rect x="0" y="2" width="5" height="1"/></svg>
<svg class="a" style="left:1043px;top:624px" width="5" height="3" fill="#000" shape-rendering="crispEdges"><rect x="0" y="0" width="5" height="1"/><rect x="1" y="1" width="3" height="1"/><rect x="2" y="2" width="1" height="1"/></svg>
<span class="t " style="left:724.50px;top:634px;font-size:11.5px;letter-spacing:-0.120px;">Average:</span>
<div class="a bb" style="left:833px;top:633px;width:110px;height:20px;border:1px solid #7f8995;background:#f0f0f0;"></div>
<div class="a" style="left:836px;top:636px;width:71px;height:14px;background:#fff;"></div>
<div class="a bb" style="left:909px;top:634px;width:17px;height:18px;background:#e1e1e1;border-left:1px solid #a8a8a8;"></div>
<div class="a" style="left:926px;top:634px;width:1px;height:18px;background:#fafafa;"></div>
<svg class="a" style="left:913px;top:638.5px" width="10" height="8" viewBox="0 0 10 8"><path d="M1.2 2 L5 5.8 L8.8 2" fill="none" stroke="#4a4a4a" stroke-width="1.1"/></svg>
<span class="t " style="left:892.80px;top:635px;font-size:11px;letter-spacing:-0.237px;">1 s</span>
<div class="a" style="left:927px;top:634px;width:15px;height:18px;background:#a9a9a9;"></div>
<div class="a" style="left:928px;top:635px;width:13px;height:7px;background:#f0f0f0;"></div>
<div class="a" style="left:928px;top:644px;width:13px;height:7px;background:#f0f0f0;"></div>
<svg class="a" style="left:932px;top:637px" width="5" height="3" fill="#000" shape-rendering="crispEdges"><rect x="2" y="0" width="1" height="1"/><rect x="1" y="1" width="3" height="1"/><rect x="0" y="2" width="5" height="1"/></svg>
<svg class="a" style="left:932px;top:646px" width="5" height="3" fill="#000" shape-rendering="crispEdges"><rect x="0" y="0" width="5" height="1"/><rect x="1" y="1" width="3" height="1"/><rect x="2" y="2" width="1" height="1"/></svg>
<div class="a bb" style="left:948px;top:633px;width:106px;height:20px;border:1px solid #7f8995;background:#f0f0f0;"></div>
<div class="a" style="left:951px;top:636px;width:67px;height:14px;background:#fff;"></div>
<div class="a bb" style="left:1020px;top:634px;width:17px;height:18px;background:#e1e1e1;border-left:1px solid #a8a8a8;"></div>
<div class="a" style="left:1037px;top:634px;width:1px;height:18px;background:#fafafa;"></div>
<svg class="a" style="left:1024px;top:638.5px" width="10" height="8" viewBox="0 0 10 8"><path d="M1.2 2 L5 5.8 L8.8 2" fill="none" stroke="#4a4a4a" stroke-width="1.1"/></svg>
<span class="t " style="left:1003.50px;top:635px;font-size:11px;letter-spacing:-0.087px;">5 s</span>
<div class="a" style="left:1038px;top:634px;width:15px;height:18px;background:#a9a9a9;"></div>
<div class="a" style="left:1039px;top:635px;width:13px;height:7px;background:#f0f0f0;"></div>
<div class="a" style="left:1039px;top:644px;width:13px;height:7px;background:#f0f0f0;"></div>
<svg class="a" style="left:1043px;top:637px" width="5" height="3" fill="#000" shape-rendering="crispEdges"><rect x="2" y="0" width="1" height="1"/><rect x="1" y="1" width="3" height="1"/><rect x="0" y="2" width="5" height="1"/></svg>
<svg class="a" style="left:1043px;top:646px" width="5" height="3" fill="#000" shape-rendering="crispEdges"><rect x="0" y="0" width="5" height="1"/><rect x="1" y="1" width="3" height="1"/><rect x="2" y="2" width="1" height="1"/></svg>
<span class="t " style="left:724.50px;top:656px;font-size:11.5px;letter-spacing:-0.120px;color:#6d6d6d;">Quasi Peak:</span>
<div class="a bb" style="left:833px;top:655px;width:110px;height:20px;border:1px solid #7f8995;background:#f0f0f0;"></div>
<div class="a bb" style="left:909px;top:656px;width:17px;height:18px;background:#cccccc;border-left:1px solid #bfbfbf;"></div>
<div class="a" style="left:926px;top:656px;width:1px;height:18px;background:#fafafa;"></div>
<svg class="a" style="left:913px;top:660.5px" width="10" height="8" viewBox="0 0 10 8"><path d="M1.2 2 L5 5.8 L8.8 2" fill="none" stroke="#b4b4b4" stroke-width="1.1"/></svg>
<span class="t " style="left:892.80px;top:657px;font-size:11px;letter-spacing:-0.237px;color:#6d6d6d;">1 s</span>
<div class="a" style="left:928px;top:664px;width:13px;height:2px;background:#e0e0e0;"></div>
<svg class="a" style="left:932px;top:659px" width="5" height="3" fill="#666" shape-rendering="crispEdges"><rect x="2" y="0" width="1" height="1"/><rect x="1" y="1" width="3" height="1"/><rect x="0" y="2" width="5" height="1"/></svg>
<svg class="a" style="left:932px;top:668px" width="5" height="3" fill="#666" shape-rendering="crispEdges"><rect x="0" y="0" width="5" height="1"/><rect x="1" y="1" width="3" height="1"/><rect x="2" y="2" width="1" height="1"/></svg>
<div class="a bb" style="left:948px;top:655px;width:106px;height:20px;border:1px solid #7f8995;background:#f0f0f0;"></div>
<div class="a bb" style="left:1020px;top:656px;width:17px;height:18px;background:#cccccc;border-left:1px solid #bfbfbf;"></div>
<div class="a" style="left:1037px;top:656px;width:1px;height:18px;background:#fafafa;"></div>
<svg class="a" style="left:1024px;top:660.5px" width="10" height="8" viewBox="0 0 10 8"><path d="M1.2 2 L5 5.8 L8.8 2" fill="none" stroke="#b4b4b4" stroke-width="1.1"/></svg>
<span class="t " style="left:1003.50px;top:657px;font-size:11px;letter-spacing:-0.087px;color:#6d6d6d;">5 s</span>
<div class="a" style="left:1039px;top:664px;width:13px;height:2px;background:#e0e0e0;"></div>
<svg class="a" style="left:1043px;top:659px" width="5" height="3" fill="#666" shape-rendering="crispEdges"><rect x="2" y="0" width="1" height="1"/><rect x="1" y="1" width="3" height="1"/><rect x="0" y="2" width="5" height="1"/></svg>
<svg class="a" style="left:1043px;top:668px" width="5" height="3" fill="#666" shape-rendering="crispEdges"><rect x="0" y="0" width="5" height="1"/><rect x="1" y="1" width="3" height="1"/><rect x="2" y="2" width="1" height="1"/></svg>
<span class="t " style="left:724.50px;top:678px;font-size:11.5px;letter-spacing:-0.120px;color:#6d6d6d;">RMS:</span>
<div class="a bb" style="left:833px;top:677px;width:110px;height:20px;border:1px solid #7f8995;background:#f0f0f0;"></div>
<div class="a bb" style="left:909px;top:678px;width:17px;height:18px;background:#cccccc;border-left:1px solid #bfbfbf;"></div>
<div class="a" style="left:926px;top:678px;width:1px;height:18px;background:#fafafa;"></div>
<svg class="a" style="left:913px;top:682.5px" width="10" height="8" viewBox="0 0 10 8"><path d="M1.2 2 L5 5.8 L8.8 2" fill="none" stroke="#b4b4b4" stroke-width="1.1"/></svg>
<span class="t " style="left:892.80px;top:679px;font-size:11px;letter-spacing:-0.237px;color:#6d6d6d;">1 s</span>
<div class="a" style="left:928px;top:686px;width:13px;height:2px;background:#e0e0e0;"></div>
<svg class="a" style="left:932px;top:681px" width="5" height="3" fill="#666" shape-rendering="crispEdges"><rect x="2" y="0" width="1" height="1"/><rect x="1" y="1" width="3" height="1"/><rect x="0" y="2" width="5" height="1"/></svg>
<svg class="a" style="left:932px;top:690px" width="5" height="3" fill="#666" shape-rendering="crispEdges"><rect x="0" y="0" width="5" height="1"/><rect x="1" y="1" width="3" height="1"/><rect x="2" y="2" width="1" height="1"/></svg>
<div class="a bb" style="left:948px;top:677px;width:106px;height:20px;border:1px solid #7f8995;background:#f0f0f0;"></div>
<div class="a bb" style="left:1020px;top:678px;width:17px;height:18px;background:#cccccc;border-left:1px solid #bfbfbf;"></div>
<div class="a" style="left:1037px;top:678px;width:1px;height:18px;background:#fafafa;"></div>
<svg class="a" style="left:1024px;top:682.5px" width="10" height="8" viewBox="0 0 10 8"><path d="M1.2 2 L5 5.8 L8.8 2" fill="none" stroke="#b4b4b4" stroke-width="1.1"/></svg>
<span class="t " style="left:1003.50px;top:679px;font-size:11px;letter-spacing:-0.087px;color:#6d6d6d;">5 s</span>
<div class="a" style="left:1039px;top:686px;width:13px;height:2px;background:#e0e0e0;"></div>
<svg class="a" style="left:1043px;top:681px" width="5" height="3" fill="#666" shape-rendering="crispEdges"><rect x="2" y="0" width="1" height="1"/><rect x="1" y="1" width="3" height="1"/><rect x="0" y="2" width="5" height="1"/></svg>
<svg class="a" style="left:1043px;top:690px" width="5" height="3" fill="#666" shape-rendering="crispEdges"><rect x="0" y="0" width="5" height="1"/><rect x="1" y="1" width="3" height="1"/><rect x="2" y="2" width="1" height="1"/></svg>
<span class="t " style="left:727.50px;top:706px;font-size:11.5px;letter-spacing:-0.043px;">Peak Discrimination:</span>
<div class="btn" style="left:838px;top:704px;width:213px;height:21px;"></div>
<span class="t " style="left:841.00px;top:707px;font-size:11px;letter-spacing:-0.100px;">None</span>
<svg class="a" style="left:1037px;top:710.75px" width="10" height="8" viewBox="0 0 10 8"><path d="M1.2 2 L5 5.8 L8.8 2" fill="none" stroke="#404040" stroke-width="1.1"/></svg>
<div class="gb" style="left:1072px;top:450px;width:116px;height:294px;"></div>
<div class="a" style="left:1078.4px;top:448px;width:71.59999999999991px;height:5px;background:#f0f0f0;"></div>
<span class="t " style="left:1079.90px;top:442px;font-size:11.5px;letter-spacing:-0.389px;">Change Order</span>
<div class="" style="left:1083px;top:462px;width:94px;height:225px;background:#fff;border:1px solid #828790;"></div>
<span class="t " style="left:1086.20px;top:463px;font-size:11px;letter-spacing:-0.092px;">Frequency band</span>
<span class="t " style="left:1086.20px;top:476px;font-size:11px;letter-spacing:-0.900px;">RBW</span>
<span class="t " style="left:1086.20px;top:489px;font-size:11px;letter-spacing:-0.900px;">VBW</span>
<span class="t " style="left:1086.20px;top:502px;font-size:11px;letter-spacing:-0.417px;">LISN line</span>
<span class="t " style="left:1086.20px;top:515px;font-size:11px;letter-spacing:0.144px;">Testsite</span>
<div class="btn" style="left:1084px;top:710px;width:42px;height:23px;"></div>
<span class="t " style="left:1098.80px;top:713px;font-size:11.5px;letter-spacing:0.199px;">Up</span>
<div class="btn" style="left:1134px;top:710px;width:42px;height:23px;"></div>
<span class="t " style="left:1140.80px;top:713px;font-size:11.5px;letter-spacing:0.033px;">Down</span>
</body></html>
